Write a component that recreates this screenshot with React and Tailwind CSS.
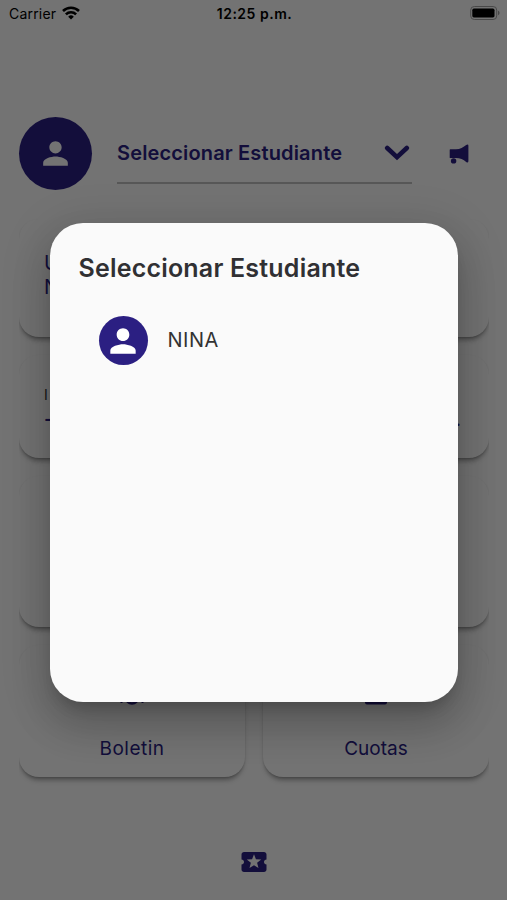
import React from 'react';
import { MdPerson, MdLocalPlay } from 'react-icons/md';

const shortcuts = [
  { label: 'Boletin', icon: BadgeIcon, labelClass: 'tracking-[0.5px]' },
  { label: 'Cuotas', icon: BillIcon, labelClass: 'tracking-[0px]' },
];

const students = [{ id: 1, name: 'NINA' }];

function WifiIcon() {
  return (
    <svg viewBox="0 0 18 14" className="w-[18px] h-[14px] -mt-px" fill="none" stroke="#000" strokeWidth="2.6">
      <path d="M1 5 A11.5 11.5 0 0 1 17 5" />
      <path d="M3.9 8.4 A7.3 7.3 0 0 1 14.1 8.4" />
      <path d="M9 13.4 L6.2 10.7 A4 4 0 0 1 11.8 10.7 Z" fill="#000" stroke="none" />
    </svg>
  );
}

function BatteryIcon() {
  return (
    <svg viewBox="0 0 30 14" className="w-[30px] h-[14px] -mt-px">
      <rect x="0.7" y="0.5" width="26" height="13" rx="3.6" fill="none" stroke="#a0a0a0" />
      <rect x="2.3" y="2.6" width="22.2" height="8.8" rx="1.6" fill="#000" />
      <path d="M28 4.8 C30 5.4 30 8.6 28 9.2 Z" fill="#a0a0a0" />
    </svg>
  );
}

function ChevronIcon() {
  return (
    <svg viewBox="0 0 26 18" className="w-[26px] h-[18px]" fill="none" stroke="#2b1f82" strokeWidth="4.6" strokeLinecap="round" strokeLinejoin="miter">
      <path d="M3.2 4 L13 13.2 L22.8 4" />
    </svg>
  );
}

function MegaphoneIcon() {
  return (
    <svg viewBox="0 0 20 20" className="w-5 h-5" fill="#2b1f82">
      <path d="M0.7 5.9 Q0.7 5.3 1.3 5.3 H7 C11 5.3 14.5 3 17.2 0.9 Q19.4 -0.4 19.4 1.8 V17 Q19.4 19.3 17.2 17.9 C14.5 15.2 11 14 7 14 H1.3 Q0.7 14 0.7 13.4 Z" />
      <circle cx="4.6" cy="16.9" r="2.7" />
    </svg>
  );
}

function BadgeIcon() {
  return (
    <svg viewBox="0 0 26 26" className="w-[26px] h-[26px]" fill="none" stroke="#2b1f82" strokeWidth="2">
      <path d="M2.5 24 V2 H23.5 V24" />
      <circle cx="13" cy="18.5" r="6" strokeWidth="2.6" />
    </svg>
  );
}

function BillIcon() {
  return (
    <svg viewBox="0 0 26 26" className="w-[26px] h-[26px]" fill="#2b1f82">
      <rect x="2" y="2" width="22" height="23.6" rx="2" />
    </svg>
  );
}

function Card({ className = '', children }) {
  return (
    <div className={`rounded-[20px] bg-[#fafafa] shadow-[0_5px_5px_-2px_rgba(0,0,0,0.35),0_1px_2px_rgba(0,0,0,0.12)] ${className}`}>
      {children}
    </div>
  );
}

function StatusBar() {
  return (
    <div className="grid grid-cols-3 items-center h-[27px] pl-[9px] pr-[7px] text-black font-['Inter',sans-serif]">
      <div className="flex items-center gap-[6px] text-[14px] tracking-[0.2px]">
        <span>Carrier</span>
        <WifiIcon />
      </div>
      <div className="text-center text-[14px] font-semibold tracking-[0.5px] whitespace-nowrap">12:25 p.m.</div>
      <div className="flex justify-end"><BatteryIcon /></div>
    </div>
  );
}

function Header() {
  return (
    <div className="flex items-center mt-[90px] pl-[19px]">
      <div className="flex items-center justify-center w-[73px] h-[73px] rounded-full bg-[#2b1f82]">
        <MdPerson className="w-[37px] h-[37px] text-[#fafafa]" />
      </div>
      <div className="flex items-center justify-between w-[295px] h-[61px] ml-[25px] pr-[2px] border-b-2 border-[#bdbdbd]">
        <span className="text-[20px] font-semibold text-[#2b1f82] tracking-[0.15px] whitespace-nowrap">Seleccionar Estudiante</span>
        <ChevronIcon />
      </div>
      <div className="ml-[37px]"><MegaphoneIcon /></div>
    </div>
  );
}

function StudentDialog() {
  return (
    <div className="absolute inset-0 flex items-start justify-center bg-black/54 pt-[223px]">
      <div className="w-[408px] h-[479px] rounded-[33px] bg-[#fafafa] shadow-[0_11px_15px_-7px_rgba(0,0,0,0.2),0_24px_38px_3px_rgba(0,0,0,0.14),0_9px_46px_8px_rgba(0,0,0,0.12)]">
        <h2 className="pt-[29px] pl-[29px] text-[25px] leading-8 font-semibold text-[#303033] tracking-[0.2px] whitespace-nowrap">
          Seleccionar Estudiante
        </h2>
        {students.map(student => (
          <div key={student.id} className="flex items-center gap-5 mt-[32px] pl-[49px]">
            <div className="flex items-center justify-center w-[49px] h-[49px] rounded-full bg-[#2b1f82]">
              <MdPerson className="w-[38px] h-[38px] text-white" />
            </div>
            <span className="-mt-0.5 text-[20px] text-[#333] tracking-[0.5px]">{student.name}</span>
          </div>
        ))}
      </div>
    </div>
  );
}

export default function App() {
  return (
    <div className="relative w-full h-[900px] overflow-hidden bg-[#fafafa] font-['Inter',sans-serif]">
      <StatusBar />
      <Header />
      <div className="flex flex-col gap-[18px] ml-[19px] mr-[18px] mt-[29px] h-[600px] overflow-hidden">
        <Card className="shrink-0 h-[118px] pt-[32px] pl-[25px] text-[20px] leading-[24px] text-[#2b1f82]">
          <div>U</div>
          <div>N</div>
        </Card>
        <Card className="shrink-0 h-[103px] pt-[30px] px-[25px]">
          <div className="text-[14px] leading-5 text-[#333]">I</div>
          <div className="flex justify-between text-[20px] leading-7 pr-[3px] text-[#2b1f82]">
            <span className="font-semibold">-</span>
            <span>.</span>
          </div>
        </Card>
        <Card className="shrink-0 h-[151px]" />
        <div className="grid grid-cols-2 gap-[18px] shrink-0">
          {shortcuts.map(({ label, icon: Icon, labelClass }) => (
            <Card key={label} className="flex flex-col items-center h-[132px] pt-[34px]">
              <Icon />
              <span className={`mt-[30px] text-[19px] leading-7 text-[#2b1f82] ${labelClass}`}>{label}</span>
            </Card>
          ))}
        </div>
      </div>
      <div className="flex justify-center mt-[28px]">
        <MdLocalPlay className="w-[30px] h-[30px] text-[#2b1f82]" />
      </div>
      <StudentDialog />
    </div>
  );
}
